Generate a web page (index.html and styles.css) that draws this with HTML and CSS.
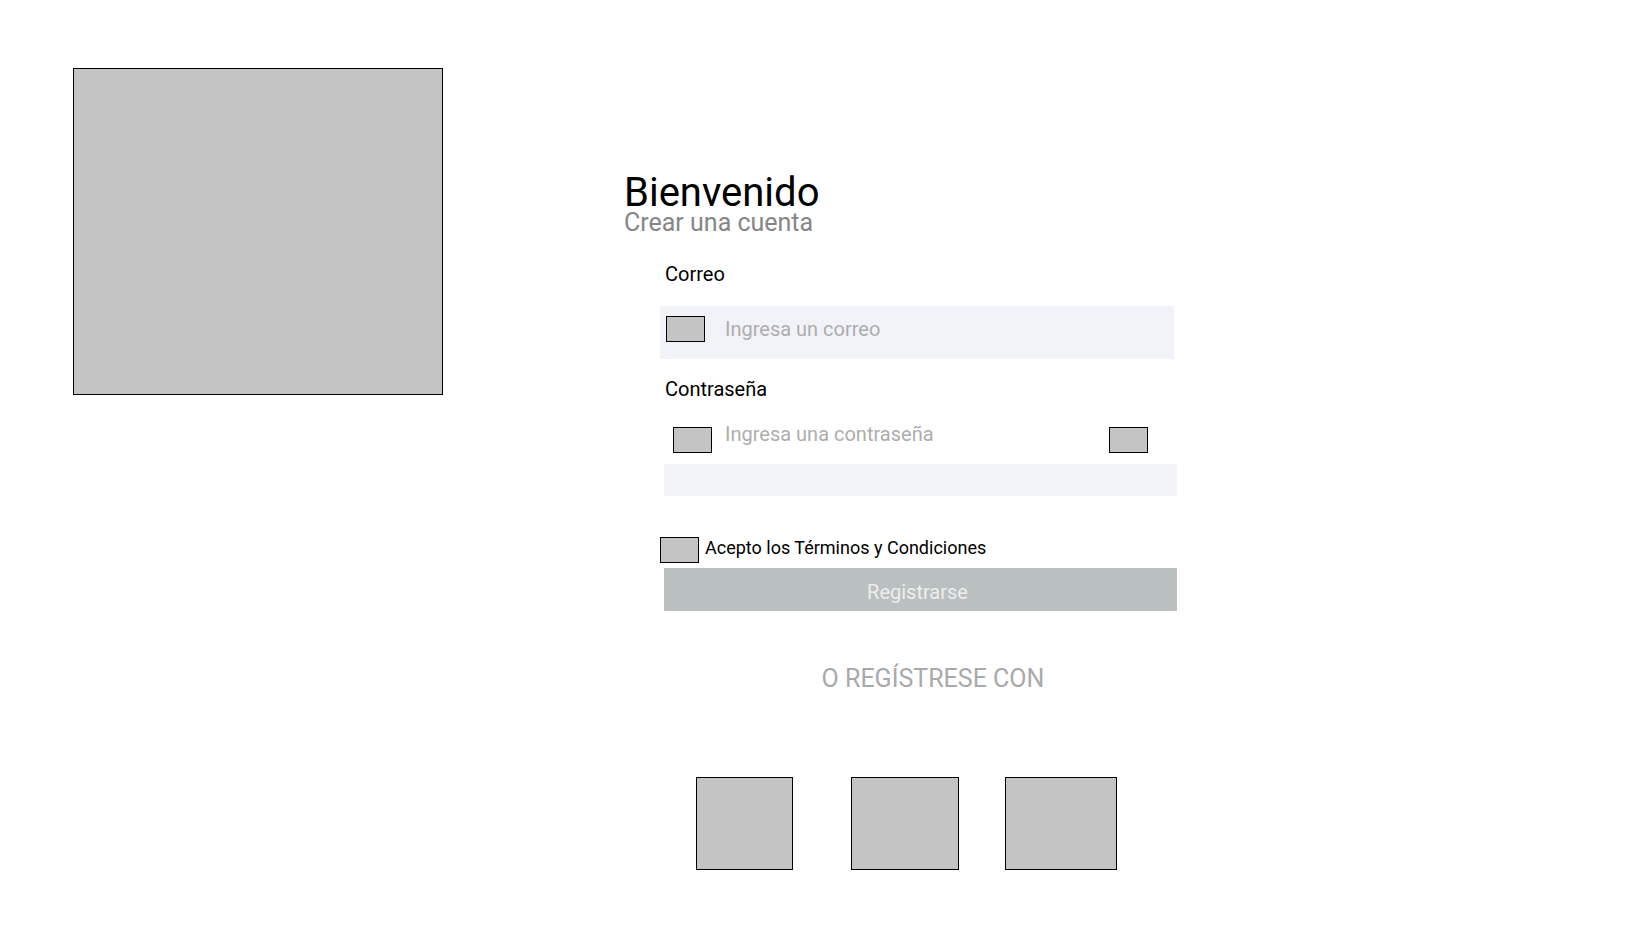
FILE: index.html
```html
<!DOCTYPE html>
<html lang="es">
<head>
<meta charset="utf-8">
<meta name="viewport" content="width=device-width, initial-scale=1">
<title>Crear una cuenta</title>
<link rel="stylesheet" href="styles.css">
</head>
<body>
<div class="page">
  <div class="hero block"></div>
  <main class="signup">
    <h1 class="title">Bienvenido</h1>
    <p class="subtitle">Crear una cuenta</p>
    <form class="form">
      <label class="label" for="email">Correo</label>
      <div class="field">
        <span class="icon block"></span>
        <input class="input" id="email" type="email" placeholder="Ingresa un correo">
      </div>
      <label class="label label-password" for="password">Contraseña</label>
      <div class="password-row">
        <span class="icon block"></span>
        <input class="input" id="password" type="password" placeholder="Ingresa una contraseña">
        <button class="icon block" type="button" aria-label="Mostrar contraseña"></button>
      </div>
      <div class="bar"></div>
      <div class="terms">
        <input class="icon block" id="terms" type="checkbox">
        <label class="terms-label" for="terms">Acepto los Términos y Condiciones</label>
      </div>
      <button class="submit" type="submit">Registrarse</button>
      <p class="alternative">O REGÍSTRESE CON</p>
      <div class="social">
        <button class="block social-first" type="button" aria-label="Opción 1"></button>
        <button class="block social-second" type="button" aria-label="Opción 2"></button>
        <button class="block social-third" type="button" aria-label="Opción 3"></button>
      </div>
    </form>
  </main>
</div>
</body>
</html>
```

FILE: styles.css
```css
* {
  box-sizing: border-box;
}

body {
  margin: 0;
  background: #fff;
  color: #000;
  font-family: Roboto, "Liberation Sans", sans-serif;
  font-size: 20px;
  line-height: 24px;
}

button,
input {
  margin: 0;
  padding: 0;
  font: inherit;
}

.page {
  display: grid;
  grid-template-columns: 370fr 181fr 553fr 448fr;
  align-items: start;
  padding: 68px 0 68px 73px;
}

.block {
  display: block;
  border: 1px solid #000;
  border-radius: 0;
  background: #c4c4c4;
  appearance: none;
}

.hero {
  aspect-ratio: 370 / 327;
}

.signup {
  grid-column: 3;
  padding-top: 106px;
}

.title {
  margin: 0;
  font-size: 40px;
  font-weight: 400;
  line-height: 37px;
}

.subtitle {
  margin: 0;
  color: #868686;
  font-size: 25px;
}

.form {
  display: flex;
  flex-direction: column;
  padding: 27px 0 0 36px;
}

.label {
  padding-left: 5px;
}

.label-password {
  margin-top: 18px;
}

.icon {
  flex: none;
  width: 39px;
  height: 26px;
}

.input {
  flex: 1;
  min-width: 0;
  height: 26px;
  border: 0;
  background: transparent;
  color: #000;
}

.input::placeholder {
  color: #adadad;
  opacity: 1;
}

.field {
  display: flex;
  gap: 20px;
  margin: 20px 3px 0 0;
  padding: 10px 6px 17px;
  background: #f2f3f8;
}

.password-row {
  display: flex;
  gap: 13px;
  height: 32px;
  margin-top: 20px;
  padding: 0 29px 0 13px;
}

.password-row .icon {
  align-self: flex-end;
}

.bar {
  height: 32px;
  margin: 11px 0 0 4px;
  background: #f2f3f8;
}

.terms {
  display: flex;
  gap: 6px;
  margin-top: 41px;
}

.terms-label {
  font-size: 18px;
  line-height: 22px;
}

.submit {
  margin: 5px 0 0 4px;
  padding: 12px 6px 7px 0;
  border: 0;
  background: #b9c0bf;
  color: #eee;
}

.alternative {
  margin: 56px 0 0;
  padding-left: 29px;
  color: #a9a9a9;
  font-size: 25px;
  text-align: center;
}

.social {
  display: grid;
  grid-template-columns: 97fr 58fr 108fr 46fr 112fr;
  height: 93px;
  margin: 86px 60px 0 36px;
}

.social-second {
  grid-column: 3;
}

.social-third {
  grid-column: 5;
}
```
